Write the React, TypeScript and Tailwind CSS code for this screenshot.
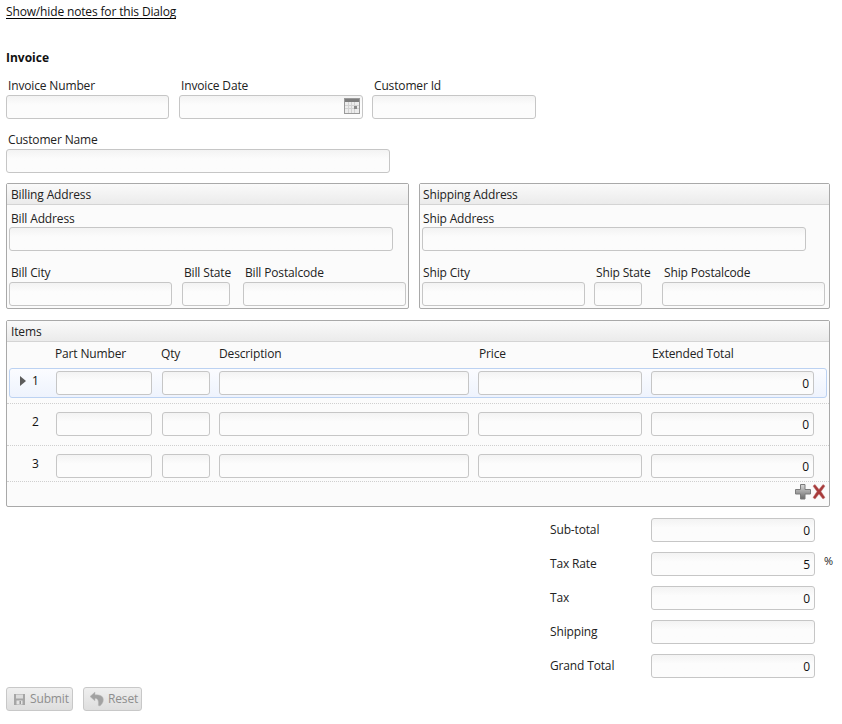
import React from "react";

const Field = ({ w, value, children }: { w: string; value?: string; children?: React.ReactNode }) => (
  <div className={`${w} relative h-6 shrink-0 rounded-[3px] border border-[#c6c6c6] bg-gradient-to-b from-[#f3f3f3] to-[#fcfcfc] to-40% pr-[4px] pt-[3px] text-right leading-[18px] text-[#111]`}>
    {value}
    {children}
  </div>
);

const Labeled = ({ label, w, ml, lx, children }: { label: string; w: string; ml?: string; lx?: string; children?: React.ReactNode }) => (
  <div className={`${ml ?? ""} ${w} shrink-0`}>
    <div className={`h-[17px] whitespace-nowrap leading-[15px] ${lx ?? "pl-[2px]"}`}>{label}</div>
    <Field w="w-full">{children}</Field>
  </div>
);

const Panel = ({ title, className, tx, children }: { title: string; className: string; tx?: string; children: React.ReactNode }) => (
  <div className={`${className} rounded-[2px] border border-[#a9a9a9] bg-[#fbfbfb]`}>
    <div className={`h-[21px] border-b border-[#d4d4d4] bg-gradient-to-b from-[#fafafa] to-[#ebebeb] ${tx ?? "pl-[4px]"} leading-[21px]`}>{title}</div>
    {children}
  </div>
);

const CalendarIcon = () => (
  <svg className="absolute right-[2px] top-[2px]" width="16" height="16" viewBox="0 0 16 16">
    <rect x="0.5" y="0.5" width="15" height="15" fill="#ececec" stroke="#9a9a9a" />
    <rect x="1" y="1" width="14" height="3" fill="#7d7d7d" />
    <path d="M4.5 4v11M7.5 4v11M10.5 4v11M1 7.5h14M1 10.5h14" stroke="#d2d2d2" fill="none" />
    <rect x="10" y="8" width="3" height="3" fill="#8a8a8a" />
  </svg>
);

const AddressPanel = ({ title, cls, prefix, ship }: { title: string; cls: string; prefix: string; ship: boolean }) => (
  <Panel title={title} className={cls} tx={ship ? "pl-[3px]" : "pl-[4px]"}>
    <div className="pl-[2px] pt-[6px]">
      <div className={`h-[16px] leading-[15px] ${ship ? "pl-[1px]" : "pl-[2px]"}`}>{prefix} Address</div>
      <Field w="w-[384px]" />
    </div>
    <div className="mt-[14px] flex pl-[2px]">
      <Labeled label={`${prefix} City`} w="w-[163px]" lx={ship ? "pl-[1px]" : "pl-[2px]"} />
      <Labeled label={`${prefix} State`} w="w-[48px]" ml={ship ? "ml-[9px]" : "ml-[10px]"} />
      <Labeled label={`${prefix} Postalcode`} w="w-[163px]" ml={ship ? "ml-[20px]" : "ml-[13px]"} />
    </div>
  </Panel>
);

const Row = ({ n, active, cls }: { n: number; active?: boolean; cls: string }) => (
  <div className={`${cls} border-b border-dotted border-[#cfcfcf] px-[2px]`}>
    <div className={`flex h-[30px] items-center rounded-[3px] border ${active ? "border-[#bcd2f2] bg-gradient-to-b from-[#fbfcff] to-[#eef3fd]" : "border-transparent"}`}>
      <div className="relative w-[46px] shrink-0 pl-[22px] text-[#111]">
        {active && (
          <svg className="absolute left-[10px] top-[2px]" width="6" height="10" viewBox="0 0 6 10">
            <path d="M0 0L6 5L0 10Z" fill="#5c5c5c" />
          </svg>
        )}
        <span className="relative top-[-2px]">{n}</span>
      </div>
      <div className="flex items-center">
        <Field w="w-[96px]" />
        <Field w="w-[48px] ml-[10px]" />
        <Field w="w-[250px] ml-[9px]" />
        <Field w="w-[164px] ml-[9px]" />
        <Field w="w-[163px] ml-[9px]" value="0" />
      </div>
    </div>
  </div>
);

const Total = ({ label, value, suffix }: { label: string; value?: string; suffix?: boolean }) => (
  <div className="flex h-6">
    <div className="w-[101px] leading-[23px]">{label}</div>
    <Field w="w-[164px]" value={value} />
    {suffix && <div className="ml-[9px] text-[11px] leading-[18px]">%</div>}
  </div>
);

export default function App() {
  return (
    <div className="relative h-[724px] w-[842px] overflow-hidden bg-white pl-[6px] text-[12px] tracking-[-0.15px] text-[#222]" style={{ fontFamily: '"Open Sans", sans-serif' }}>
      <div className="pt-[3px]">
        <a className="inline-block h-[15px] border-b border-black leading-[15px] text-[#111]">Show/hide notes for this Dialog</a>
      </div>
      <div className="mt-[28px] text-[12px] font-bold leading-[18px] tracking-normal text-[#111]">Invoice</div>
      <div className="mt-[11px] flex">
        <Labeled label="Invoice Number" w="w-[163px]" />
        <Labeled label="Invoice Date" w="w-[184px]" ml="ml-[10px]">
          <CalendarIcon />
        </Labeled>
        <Labeled label="Customer Id" w="w-[164px]" ml="ml-[9px]" />
      </div>
      <div className="mt-[13px]">
        <Labeled label="Customer Name" w="w-[384px]" />
      </div>
      <div className="mt-[10px] flex">
        <AddressPanel title="Billing Address" cls="h-[126px] w-[403px]" prefix="Bill" ship={false} />
        <AddressPanel title="Shipping Address" cls="ml-[10px] h-[126px] w-[411px]" prefix="Ship" ship />
      </div>
      <Panel title="Items" className="mt-[11px] h-[187px] w-[824px]">
        <div className="relative h-[25px] leading-[21px]">
          <span className="absolute left-[48px] top-[1px]">Part Number</span>
          <span className="absolute left-[154px] top-[1px]">Qty</span>
          <span className="absolute left-[212px] top-[1px]">Description</span>
          <span className="absolute left-[472px] top-[1px]">Price</span>
          <span className="absolute left-[645px] top-[1px]">Extended Total</span>
        </div>
        <Row n={1} active cls="h-[37px] pt-[1px]" />
        <Row n={2} cls="h-[42px] pt-[5px]" />
        <Row n={3} cls="h-[36px] pt-[5px]" />
        <div className="flex justify-end pr-[3px] pt-[2px]">
          <svg width="16" height="16" viewBox="0 0 16 16" className="mr-[1px]">
            <defs>
              <linearGradient id="pg" x1="0" y1="0" x2="0" y2="1">
                <stop offset="0" stopColor="#dcdcdc" />
                <stop offset="1" stopColor="#6a6a6a" />
              </linearGradient>
            </defs>
            <path d="M5.5 0.5h4.5v5h5.5v4.5h-5.5v5h-4.5v-5h-5V5.5h5z" fill="url(#pg)" stroke="#7c7c7c" />
          </svg>
          <svg width="14" height="16" viewBox="0 0 14 16">
            <path d="M1 2L3 0.5L7 5.5L11 0.5L13 2L9 7.5L13 13.5L11 15L7 10L3 15L1 13.5L5 7.5Z" fill="#a83a3a" stroke="#bb7272" strokeWidth="0.5" />
          </svg>
        </div>
      </Panel>
      <div className="ml-[544px] mt-[11px] flex flex-col gap-[10px]">
        <Total label="Sub-total" value="0" />
        <Total label="Tax Rate" value="5" suffix />
        <Total label="Tax" value="0" />
        <Total label="Shipping" />
        <Total label="Grand Total" value="0" />
      </div>
      <div className="mt-[9px] flex gap-[10px] text-[#8e8e8e]">
        <div className="flex h-6 w-[67px] items-center rounded-[3px] border border-[#c8c8c8] bg-gradient-to-b from-[#efefef] to-[#dedede] pl-[6px]">
          <svg width="13" height="13" viewBox="0 0 13 13" className="mr-[4px]">
            <rect x="1" y="1" width="11" height="11" fill="#a6a6a6" />
            <rect x="3" y="1.5" width="7" height="4" fill="#dcdcdc" />
            <rect x="3.5" y="7.5" width="6" height="4" fill="#e4e4e4" />
            <rect x="6.5" y="8" width="1.5" height="3" fill="#999" />
          </svg>
          Submit
        </div>
        <div className="flex h-6 w-[59px] items-center rounded-[3px] border border-[#c8c8c8] bg-gradient-to-b from-[#efefef] to-[#dedede] pl-[5px]">
          <svg width="16" height="16" viewBox="0 0 16 16" className="mr-[3px]">
            <path d="M6 1L1 5.5L6 10V7.5C8.5 7.5 9.8 9 9.3 14.5L11 15C14 12.5 15 9.5 14 6.8C13 4.5 10 3.5 6 3.8Z" fill="#a2a2a2" stroke="#bcbcbc" strokeWidth="0.5" />
          </svg>
          Reset
        </div>
      </div>
    </div>
  );
}
